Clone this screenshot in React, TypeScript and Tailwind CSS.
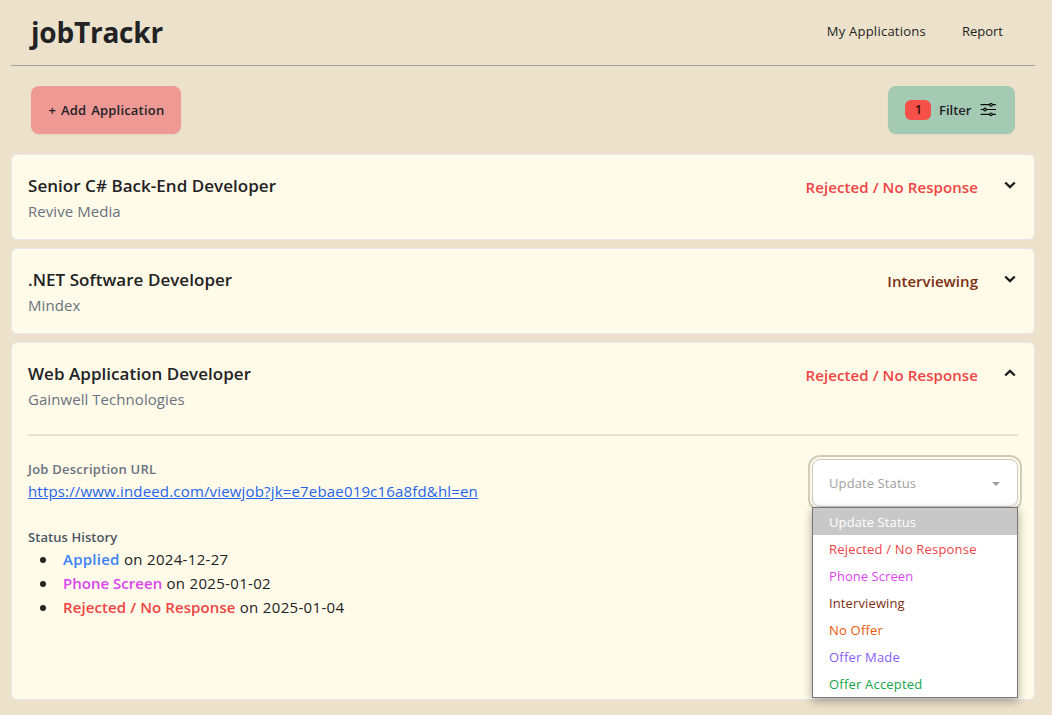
import React from "react";

type Status = { label: string; color: string; bold: string; option: string };

const STATUS: Record<string, Status> = {
  rejected: { label: "Rejected / No Response", color: "text-[#ef4444]", bold: "tracking-[0.1px]", option: "tracking-[0.2px]" },
  phone: { label: "Phone Screen", color: "text-[#d946ef]", bold: "tracking-[0.02px]", option: "tracking-[0.06px]" },
  interviewing: { label: "Interviewing", color: "text-[#7c2d12]", bold: "tracking-[0.04px]", option: "tracking-[0.12px]" },
  noOffer: { label: "No Offer", color: "text-[#ea580c]", bold: "", option: "tracking-[0.2px]" },
  offerMade: { label: "Offer Made", color: "text-[#8b5cf6]", bold: "", option: "tracking-[0.2px]" },
  accepted: { label: "Offer Accepted", color: "text-[#16a34a]", bold: "", option: "tracking-[0.2px]" },
  applied: { label: "Applied", color: "text-[#3b82f6]", bold: "tracking-[0.25px]", option: "" },
};

const OPTIONS = ["rejected", "phone", "interviewing", "noOffer", "offerMade", "accepted"];

const HISTORY = [
  { status: "applied", date: "2024-12-27" },
  { status: "phone", date: "2025-01-02" },
  { status: "rejected", date: "2025-01-04" },
];

function Chevron({ open = false }: { open?: boolean }) {
  return (
    <svg width="12" height="8" viewBox="0 0 12 8" fill="none" stroke="#1b1b1e" strokeWidth="2.300" className="mt-[26px]">
      <path d={open ? "M1.200 6.500 6 1.900 10.800 6.500" : "M1.200 1.500 6 6.100 10.800 1.500"} />
    </svg>
  );
}

function FilterIcon() {
  return (
    <svg width="16" height="14" viewBox="0 0 16 14" fill="none" stroke="#0d0d0d" strokeWidth="1.200">
      <path d="M1 1.700H9.500M12.500 1.700H15.500M1 6.500H3.500M6.500 6.500H15.500M1 11.300H9.500M12.500 11.300H15.500" strokeLinecap="round" />
      <circle cx="11" cy="1.800" r="1.300" />
      <circle cx="5" cy="6.500" r="1.300" />
      <circle cx="11" cy="11.300" r="1.300" />
    </svg>
  );
}

function Card({
  title,
  company,
  status,
  open = false,
  children,
}: {
  title: string;
  company: string;
  status: string;
  open?: boolean;
  children?: React.ReactNode;
}) {
  const s = STATUS[status];
  return (
    <section
      className={`rounded-md border border-[#e5e7eb] bg-[#fffbe8] px-4 ${open ? "h-[358px]" : "h-[86px]"}`}
    >
      <div className="flex h-[84px] justify-between">
        <div className="pt-[17px]">
          <h2 className="h-[27px] text-[17px] leading-7 font-semibold tracking-[0.04px]">{title}</h2>
          <p className="h-6 text-[15px] leading-6 tracking-[0.06px] text-[#6b7280]">{company}</p>
        </div>
        <div className="flex items-start pr-[2px]">
          <span className={`mr-[26px] pt-5 text-[15px] leading-6 font-semibold ${s.color} ${s.bold}`}>{s.label}</span>
          <Chevron open={open} />
        </div>
      </div>
      {children}
    </section>
  );
}

function StatusSelect() {
  return (
    <div className="relative w-[206px] text-[13px]">
      <div className="flex h-12 items-center justify-between rounded-lg border border-[#c9c8c4] bg-white pr-[17px] pl-4 text-[#a0a0a0] outline-2 outline-offset-2 outline-[#d0cdb9]">
        <span className="pt-[2px] tracking-[0.1px]">Update Status</span>
        <svg width="8" height="4" viewBox="0 0 8 4" className="mt-px">
          <path d="M0 0h8L4 4z" fill="#a0a0a0" />
        </svg>
      </div>
      <ul className="absolute top-12 left-0 w-full border border-[#767676] bg-white shadow-[0_3px_9px_rgba(0,0,0,0.35)]">
        <li className="h-[27px] bg-[#c8c8c8] pl-4 leading-[28px] tracking-[0.1px] text-white">Update Status</li>
        {OPTIONS.map((key) => (
          <li key={key} className={`h-[27px] pl-4 leading-[28px] ${STATUS[key].color} ${STATUS[key].option}`}>
            {STATUS[key].label}
          </li>
        ))}
      </ul>
    </div>
  );
}

export default function App() {
  return (
    <div className="h-[715px] overflow-hidden bg-[#ece2cb] font-['Open_Sans','Noto_Sans',sans-serif] text-[#222225]">
      <div className="ml-[11px] w-[1024px]">
        <header className="flex h-[66px] items-start justify-between border-b border-[#a3a19c] pr-8 pl-5">
          <h1 className="pt-3 text-[28px] leading-10 font-bold tracking-[-0.22px]">jobTrackr</h1>
          <nav className="flex gap-9 pt-[21px] text-[13px] leading-5">
            <a className="tracking-[0.24px]">My Applications</a>
            <a>Report</a>
          </nav>
        </header>
        <div className="flex justify-between px-5 py-5">
          <button className="h-12 w-[150px] rounded-lg bg-[#ef9995] pt-px pl-px text-[13px] font-semibold tracking-[0.2px] shadow-[0_1px_2px_rgba(0,0,0,0.05)] [word-spacing:1.2px]">
            + Add Application
          </button>
          <button className="flex h-12 w-[127px] items-center rounded-lg bg-[#a4cab4] pl-[17px] text-[13px] font-semibold shadow-[0_1px_2px_rgba(0,0,0,0.05)]">
            <span className="flex h-5 w-[26px] items-center justify-center rounded-md bg-[#f65149] pl-px text-[#3a0b09]">1</span>
            <span className="mr-[9px] ml-2 pt-[2px]">Filter</span>
            <FilterIcon />
          </button>
        </div>
        <main className="flex flex-col gap-2">
          <Card title="Senior C# Back-End Developer" company="Revive Media" status="rejected" />
          <Card title=".NET Software Developer" company="Mindex" status="interviewing" />
          <Card title="Web Application Developer" company="Gainwell Technologies" status="rejected" open>
            <div className="mt-[7px] h-[2px] bg-[#e6e5d3]" />
            <div className="flex justify-between pt-[23px]">
              <div>
                <h3 className="text-[13px] leading-5 font-semibold tracking-[0.24px] text-[#6b7280]">Job Description URL</h3>
                <a className="block text-[15px] leading-6 tracking-[0.17px] text-[#2563eb] underline">
                  https://www.indeed.com/viewjob?jk=e7ebae019c16a8fd&amp;hl=en
                </a>
                <h3 className="mt-6 text-[13px] leading-5 font-semibold tracking-[0.07px] text-[#4b5563]">Status History</h3>
                <ul className="pl-3">
                  {HISTORY.map((h) => (
                    <li key={h.date} className="flex h-6 items-center text-[15px] leading-6 tracking-[0.32px]">
                      <span className="mt-px mr-[17px] h-[6px] w-[6px] rounded-full bg-[#222225]" />
                      <span>
                        <span className={`font-semibold ${STATUS[h.status].color} ${STATUS[h.status].bold}`}>
                          {STATUS[h.status].label}
                        </span>{" "}
                        on {h.date}
                      </span>
                    </li>
                  ))}
                </ul>
              </div>
              <StatusSelect />
            </div>
          </Card>
        </main>
      </div>
    </div>
  );
}
